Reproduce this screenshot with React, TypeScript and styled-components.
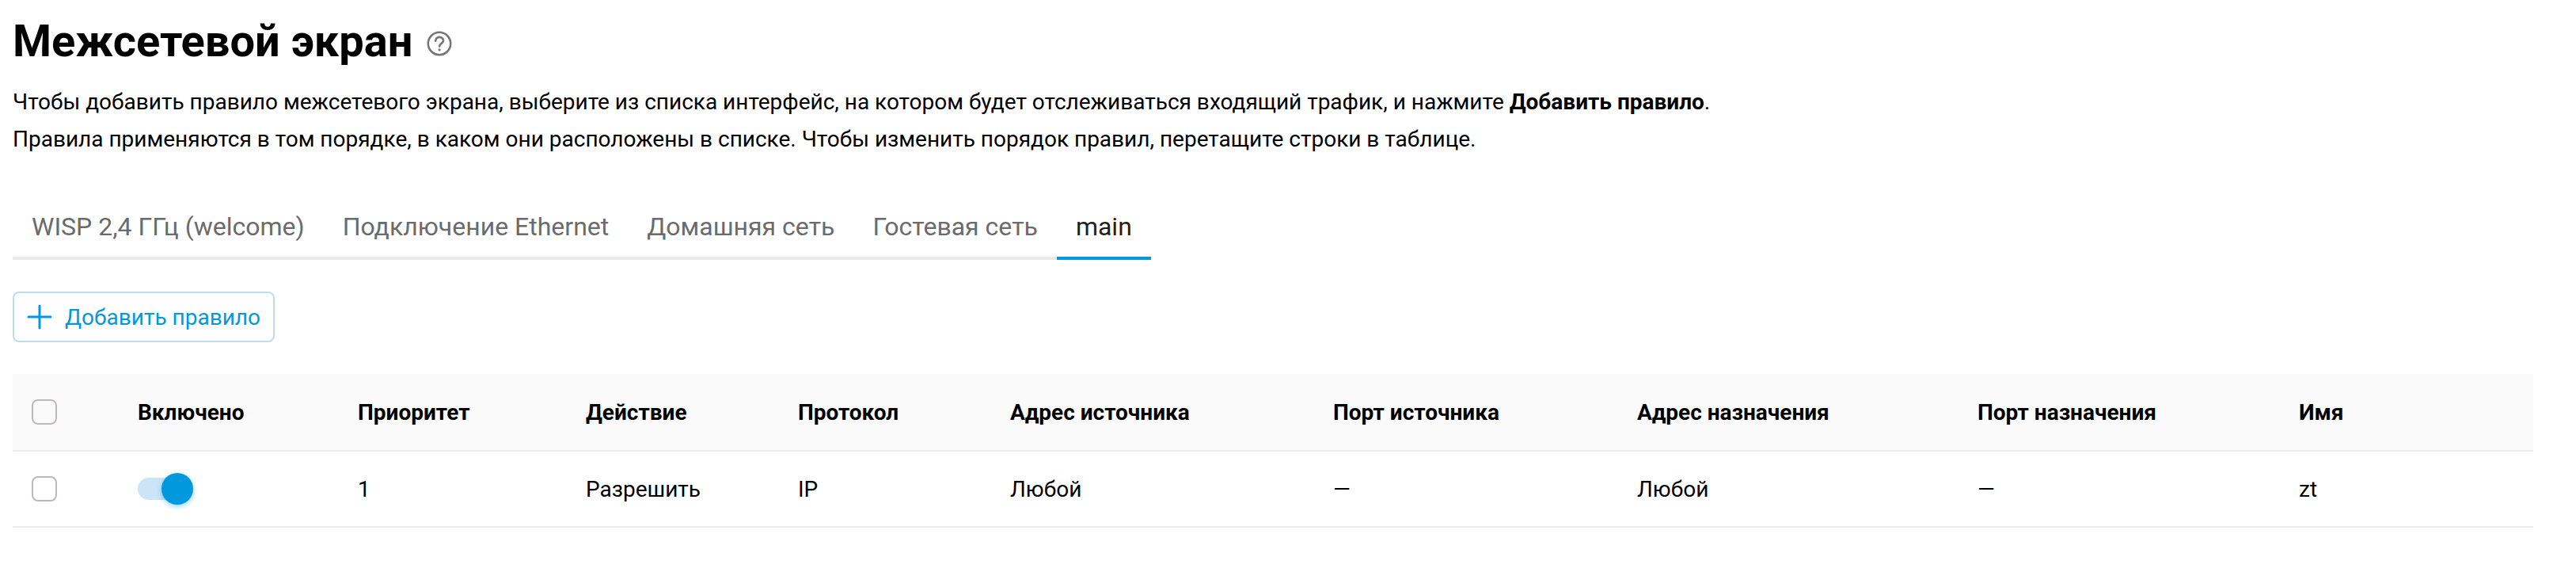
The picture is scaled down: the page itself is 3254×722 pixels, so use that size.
import React from "react";
import styled, { createGlobalStyle } from "styled-components";

const Global = createGlobalStyle`
  html, body { margin: 0; padding: 0; background: #fff; }
  body { font-family: Roboto, "Liberation Sans", sans-serif; color: #000; }
`;

const Page = styled.main`
  width: 3200px;
  padding: 0 38px 0 16px;
  box-sizing: content-box;
`;

const TitleRow = styled.div`
  display: flex;
  align-items: center;
  gap: 18px;
  height: 68px;
  padding-top: 18px;
`;

const Title = styled.h1`
  margin: 0;
  font-size: 56px;
  line-height: 68px;
  font-weight: 700;
`;

const HelpIcon = styled.svg`
  width: 32px;
  height: 32px;
  display: block;
  margin-top: 5px;
`;

const Description = styled.div`
  margin-top: 19px;
  font-size: 28px;
  line-height: 47px;
`;

const TabBar = styled.nav`
  display: inline-flex;
  margin-top: 45px;
  border-bottom: 4px solid #eaeaea;
  vertical-align: top;
`;

const Tab = styled.div<{ $active?: boolean }>`
  box-sizing: border-box;
  padding: 0 24px;
  height: 84px;
  line-height: 84px;
  font-size: 32px;
  color: ${(p) => (p.$active ? "#1f1f1f" : "#6b6b6b")};
  margin-bottom: -4px;
  border-bottom: 4px solid ${(p) => (p.$active ? "#0099dd" : "transparent")};
`;

const Toolbar = styled.div`
  margin-top: 40px;
  display: flex;
`;

const AddButton = styled.button`
  display: flex;
  align-items: center;
  gap: 16px;
  box-sizing: border-box;
  width: 331px;
  height: 64px;
  padding: 0 16px;
  border: 2px solid #bfdcee;
  border-radius: 8px;
  background: #fff;
  color: #0099dd;
  font: 400 28px Roboto, sans-serif;
`;

const Table = styled.table`
  margin-top: 40px;
  width: 3184px;
  table-layout: fixed;
  border-collapse: collapse;
`;

const HeadRow = styled.tr`
  background: #fafafa;
  height: 97px;
  border-bottom: 2px solid #eaeaea;
`;

const BodyRow = styled.tr`
  height: 96px;
  border-bottom: 2px solid #eaeaea;
`;

const Th = styled.th`
  padding: 0 24px;
  text-align: left;
  font-size: 28px;
  font-weight: 700;
`;

const Td = styled.td`
  padding: 0 24px;
  font-size: 28px;
`;

const Checkbox = styled.span`
  display: block;
  box-sizing: border-box;
  width: 32px;
  height: 32px;
  border: 2px solid #bdb9ba;
  border-radius: 8px;
`;

const Switch = styled.span`
  position: relative;
  display: block;
  width: 56px;
  height: 28px;
  border-radius: 14px;
  background: #cbe5f6;
`;

const Knob = styled.span`
  position: absolute;
  left: 30px;
  top: -6px;
  width: 40px;
  height: 40px;
  border-radius: 50%;
  background: #0099dd;
  box-shadow: 0 2px 6px rgba(0, 153, 221, 0.45);
`;

const widths = [134, 278, 288, 268, 268, 408, 384, 430, 406, 320];
const headers = ["Включено", "Приоритет", "Действие", "Протокол", "Адрес источника", "Порт источника", "Адрес назначения", "Порт назначения", "Имя"];
const cells = ["1", "Разрешить", "IP", "Любой", "—", "Любой", "—", "zt"];

export default function App() {
  return (
    <Page>
      <Global />
      <TitleRow>
        <Title>Межсетевой экран</Title>
        <HelpIcon viewBox="0 0 32 32" fill="none" stroke="#757575" strokeWidth="2.600">
          <circle cx="16" cy="16" r="14.200" />
          <path d="M11.200 12.800c0-3 2.100-4.900 4.900-4.900s4.900 1.800 4.900 4.300c0 3.500-4.900 3.500-4.900 7.300" strokeLinecap="round" />
          <circle cx="16.100" cy="23.800" r="1.600" fill="#757575" stroke="none" />
        </HelpIcon>
      </TitleRow>
      <Description>
        <div>Чтобы добавить правило межсетевого экрана, выберите из списка интерфейс, на котором будет отслеживаться входящий трафик, и нажмите <b>Добавить правило</b>.</div>
        <div>Правила применяются в том порядке, в каком они расположены в списке. Чтобы изменить порядок правил, перетащите строки в таблице.</div>
      </Description>
      <TabBar>
        <Tab>WISP 2,4 ГГц (welcome)</Tab>
        <Tab>Подключение Ethernet</Tab>
        <Tab>Домашняя сеть</Tab>
        <Tab>Гостевая сеть</Tab>
        <Tab $active>main</Tab>
      </TabBar>
      <Toolbar>
        <AddButton>
          <svg width="32" height="32" viewBox="0 0 32 32" stroke="#0099dd" strokeWidth="3" strokeLinecap="round">
            <path d="M16 2v28M2 16h28" />
          </svg>
          Добавить правило
        </AddButton>
      </Toolbar>
      <Table>
        <colgroup>
          {widths.map((w, i) => <col key={i} style={{ width: w }} />)}
        </colgroup>
        <thead>
          <HeadRow>
            <Th><Checkbox /></Th>
            {headers.map((h) => <Th key={h}>{h}</Th>)}
          </HeadRow>
        </thead>
        <tbody>
          <BodyRow>
            <Td><Checkbox /></Td>
            <Td><Switch><Knob /></Switch></Td>
            {cells.map((c, i) => <Td key={i}>{c}</Td>)}
          </BodyRow>
        </tbody>
      </Table>
    </Page>
  );
}
